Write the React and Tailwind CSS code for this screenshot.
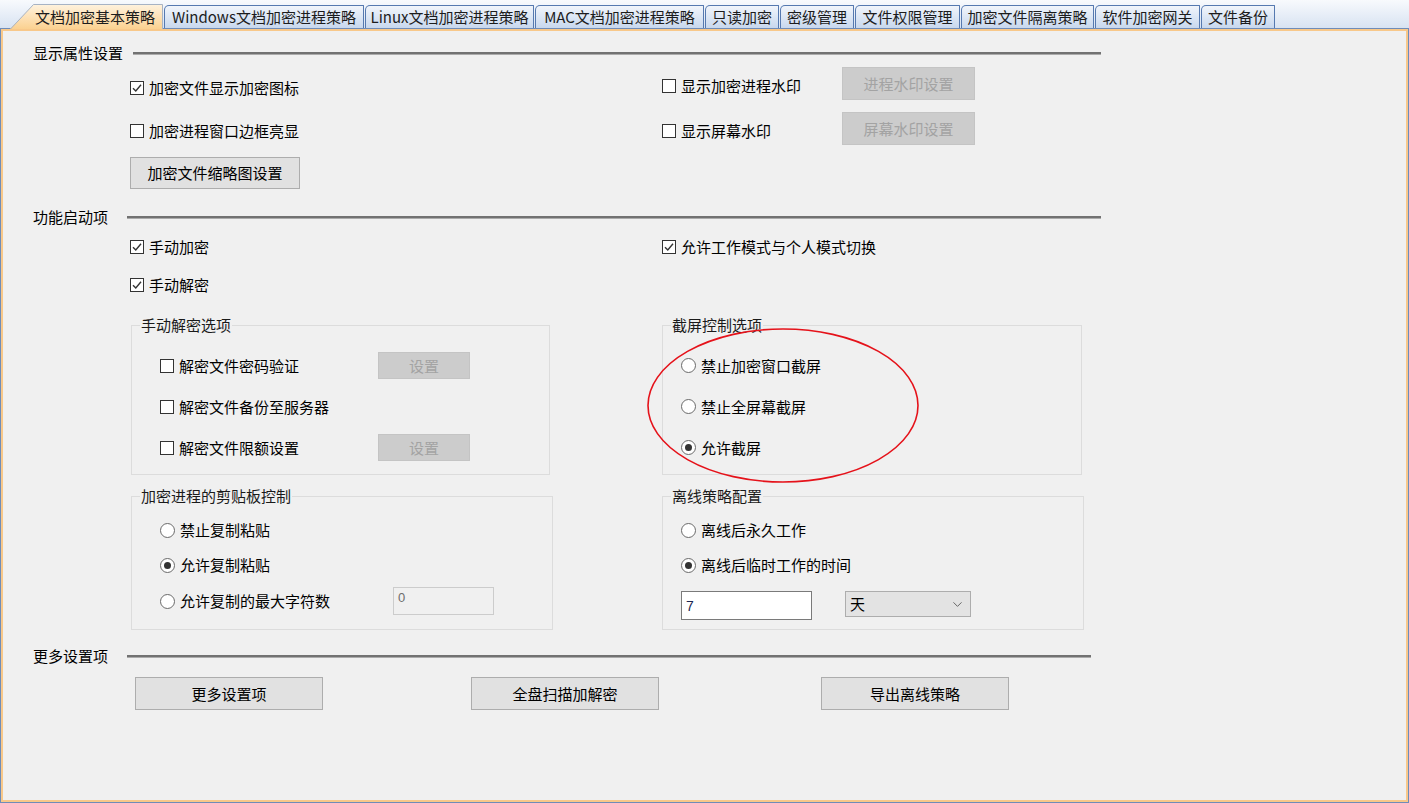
import React from 'react';
import { ChevronDown } from 'lucide-react';

const tabs = [
  { label: 'Windows文档加密进程策略', w: 'w-[200px]' },
  { label: 'Linux文档加密进程策略', w: 'w-[169px]' },
  { label: 'MAC文档加密进程策略', w: 'w-[169px]' },
  { label: '只读加密', w: 'w-[74px]' },
  { label: '密级管理', w: 'w-[74px]' },
  { label: '文件权限管理', w: 'w-[105px]' },
  { label: '加密文件隔离策略', w: 'w-[133px]' },
  { label: '软件加密网关', w: 'w-[105px]' },
  { label: '文件备份', w: 'w-[74px]' },
];

const Check = ({ checked, label, className = '' }) => (
  <div className={`flex items-center h-5 ${className}`}>
    <span className="w-[14px] h-[14px] shrink-0 border border-[#333333] bg-white flex items-center justify-center">
      {checked && (
        <svg width="12" height="12" viewBox="0 0 12 12">
          <polyline points="2,6.2 4.8,9 10,2.8" fill="none" stroke="#333333" strokeWidth="1.4" />
        </svg>
      )}
    </span>
    <span className="ml-[5px] whitespace-nowrap">{label}</span>
  </div>
);

const Radio = ({ checked, label, className = '' }) => (
  <div className={`flex items-center h-5 ${className}`}>
    <span className="w-[15px] h-[15px] shrink-0 rounded-full border border-[#6a6a6a] bg-white flex items-center justify-center">
      {checked && <span className="w-[7px] h-[7px] rounded-full bg-[#333333]" />}
    </span>
    <span className="ml-[5px] whitespace-nowrap">{label}</span>
  </div>
);

const Button = ({ label, disabled, className = '' }) => (
  <div
    className={`flex items-center justify-center border whitespace-nowrap ${
      disabled ? 'bg-[#cccccc] border-[#c4c4c4] text-[#a3a3a3]' : 'bg-[#e1e1e1] border-[#adadad] text-black'
    } ${className}`}
  >
    {label}
  </div>
);

const Heading = ({ title, textW, lineW }) => (
  <div className="flex items-center h-5 ml-[30px]">
    <span className={`${textW} shrink-0 whitespace-nowrap`}>{title}</span>
    <div className={`${lineW} h-[3px] border-t-2 border-[#727272] border-b border-b-[#ababab]`} />
  </div>
);

const Group = ({ title, className = '', children }) => (
  <fieldset className={`border border-[#dcdcdc] flex flex-col ${className}`}>
    <legend className="ml-[8px] px-px leading-5 text-[#1a1a1a]">{title}</legend>
    {children}
  </fieldset>
);

export default function App() {
  return (
    <div className="relative w-[1409px] h-[803px] flex flex-col overflow-hidden bg-[#f0f0f0] text-[15px] leading-5 text-black font-['Noto_Sans_CJK_SC','Microsoft_YaHei',sans-serif]">
      {/* tab strip */}
      <div className="h-[28px] shrink-0 flex items-end pl-[10px] bg-linear-to-b from-[#f8fafd] to-[#d8e3f2]">
        <div className="relative z-10 w-[153px] h-[25px] -mb-px">
          <div className="absolute inset-0 bg-linear-to-b from-[#fff3df] to-[#fbd190] [clip-path:polygon(24px_0,100%_0,100%_100%,0_100%)]" />
          <svg className="absolute inset-0" width="153" height="25" viewBox="0 0 153 25">
            <path d="M0.5 25 L23.5 0.5 L152.5 0.5 L152.5 25" fill="none" stroke="#a7b3c4" strokeWidth="1" />
          </svg>
          <div className="relative h-full flex items-center pl-[25px] pt-px text-[#1c1c1c]">文档加密基本策略</div>
        </div>
        {tabs.map((t) => (
          <div
            key={t.label}
            className={`${t.w} ml-px h-[23px] flex items-center justify-center border border-b-0 border-[#5579b0] rounded-tl-[5px] rounded-tr-[1px] bg-linear-to-b from-[#f1f5fb] to-[#c8d8ee] text-[#1c1c1c] whitespace-nowrap`}
          >
            {t.label}
          </div>
        ))}
      </div>

      {/* page body */}
      <div className="flex-1 border border-[#6f8cb8]">
        <div className="h-full border-2 border-[#f8c88a] pt-[12px]">
          <Heading title="显示属性设置" textW="w-[100px]" lineW="w-[968px]" />

          <div className="flex ml-[127px]">
            <div className="w-[532px] flex flex-col items-start">
              <Check checked label="加密文件显示加密图标" className="mt-[15px]" />
              <Check label="加密进程窗口边框亮显" className="mt-[23px]" />
              <Button label="加密文件缩略图设置" className="mt-[16px] w-[170px] h-[32px]" />
            </div>
            <div className="flex flex-col">
              <div className="flex items-start mt-[4px]">
                <Check label="显示加密进程水印" className="w-[180px] mt-[9px]" />
                <Button disabled label="进程水印设置" className="w-[133px] h-[33px]" />
              </div>
              <div className="flex items-start mt-[12px]">
                <Check label="显示屏幕水印" className="w-[180px] mt-[9px]" />
                <Button disabled label="屏幕水印设置" className="w-[133px] h-[33px]" />
              </div>
            </div>
          </div>

          <div className="mt-[18px]">
            <Heading title="功能启动项" textW="w-[94px]" lineW="w-[974px]" />
          </div>

          <div className="flex ml-[127px] mt-[10px]">
            <Check checked label="手动加密" className="w-[532px]" />
            <Check checked label="允许工作模式与个人模式切换" />
          </div>
          <div className="flex ml-[127px] mt-[18px]">
            <Check checked label="手动解密" />
          </div>

          <div className="flex items-stretch ml-[128px] mt-[20px]">
            <Group title="手动解密选项" className="w-[419px] pb-[13px]">
              <div className="flex items-center h-[27px] pl-[28px] mt-[17px]">
                <Check label="解密文件密码验证" className="w-[218px]" />
                <Button disabled label="设置" className="w-[92px] h-[27px]" />
              </div>
              <div className="flex items-center h-[27px] pl-[28px] mt-[14px]">
                <Check label="解密文件备份至服务器" />
              </div>
              <div className="flex items-center h-[27px] pl-[28px] mt-[14px]">
                <Check label="解密文件限额设置" className="w-[218px]" />
                <Button disabled label="设置" className="w-[92px] h-[27px]" />
              </div>
            </Group>
            <Group title="截屏控制选项" className="w-[420px] ml-[112px] pb-[13px]">
              <div className="flex items-center h-[27px] pl-[18px] mt-[17px]">
                <Radio label="禁止加密窗口截屏" />
              </div>
              <div className="flex items-center h-[27px] pl-[18px] mt-[14px]">
                <Radio label="禁止全屏幕截屏" />
              </div>
              <div className="flex items-center h-[27px] pl-[18px] mt-[14px]">
                <Radio checked label="允许截屏" />
              </div>
            </Group>
          </div>

          <div className="flex items-stretch ml-[128px] mt-[11px]">
            <Group title="加密进程的剪贴板控制" className="w-[422px] pb-[14px]">
              <div className="flex items-center h-[28px] pl-[28px] mt-[10px]">
                <Radio label="禁止复制粘贴" />
              </div>
              <div className="flex items-center h-[28px] pl-[28px] mt-[7px]">
                <Radio checked label="允许复制粘贴" />
              </div>
              <div className="flex items-center h-[28px] pl-[28px] mt-[8px]">
                <Radio label="允许复制的最大字符数" className="w-[233px]" />
                <div className="w-[101px] h-[28px] border border-[#cccccc] bg-[#f0f0f0] pl-[4px] pt-[2px] text-[13px] leading-4 text-[#6d6d6d] font-['Liberation_Sans',sans-serif]">
                  0
                </div>
              </div>
            </Group>
            <Group title="离线策略配置" className="w-[422px] ml-[109px]">
              <div className="flex items-center h-[28px] pl-[18px] mt-[10px]">
                <Radio label="离线后永久工作" />
              </div>
              <div className="flex items-center h-[28px] pl-[18px] mt-[7px]">
                <Radio checked label="离线后临时工作的时间" />
              </div>
              <div className="flex items-start pl-[18px] mt-[12px]">
                <div className="w-[131px] h-[29px] flex items-center border border-[#7a7a7a] bg-white pl-[4px] text-[14px] text-[#1b2550] font-['Liberation_Sans',sans-serif]">
                  7
                </div>
                <div className="ml-[33px] w-[126px] h-[26px] flex items-center justify-between border border-[#adadad] bg-[#e3e3e3] pl-[4px] pr-[5px]">
                  <span>天</span>
                  <ChevronDown size={15} strokeWidth={1.4} color="#555555" />
                </div>
              </div>
            </Group>
          </div>

          <div className="mt-[16px]">
            <Heading title="更多设置项" textW="w-[94px]" lineW="w-[964px]" />
          </div>

          <div className="flex ml-[132px] mt-[11px]">
            <Button label="更多设置项" className="w-[188px] h-[33px]" />
            <Button label="全盘扫描加解密" className="w-[188px] h-[33px] ml-[148px]" />
            <Button label="导出离线策略" className="w-[188px] h-[33px] ml-[162px]" />
          </div>
        </div>
      </div>

      {/* red ring drawn around the screenshot options */}
      <svg
        className="absolute left-[645px] top-[326px] pointer-events-none"
        width="276"
        height="160"
        viewBox="0 0 276 160"
      >
        <ellipse cx="138" cy="79.5" rx="135" ry="76.5" fill="none" stroke="#e5121a" strokeWidth="1.6" />
      </svg>
    </div>
  );
}
